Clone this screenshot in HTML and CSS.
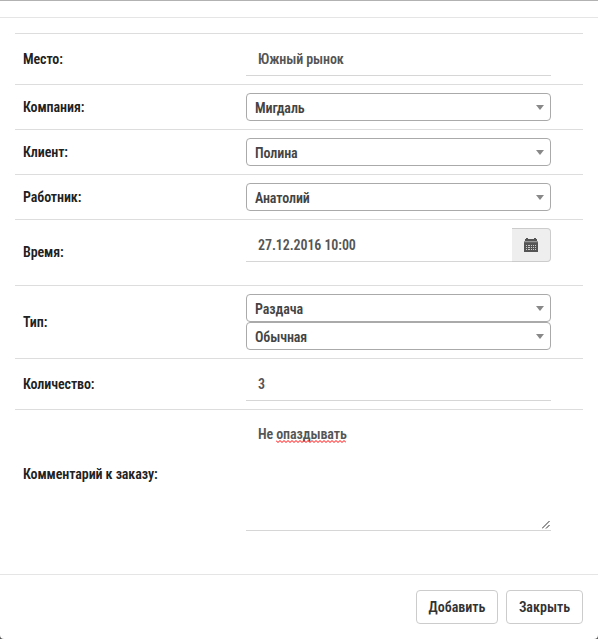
FILE: index.html
```html
<!DOCTYPE html>
<html lang="ru">
<head>
<meta charset="utf-8">
<title>Заказ</title>
<link rel="stylesheet" href="styles.css">
</head>
<body>
<main class="modal">
  <header class="modal-header"></header>
  <section class="modal-body">
    <div class="row"><div class="label">Место:</div><div class="field"><div class="input">Южный рынок</div></div></div>
    <div class="row"><div class="label">Компания:</div><div class="field"><div class="select">Мигдаль<i class="caret"></i></div></div></div>
    <div class="row"><div class="label">Клиент:</div><div class="field"><div class="select">Полина<i class="caret"></i></div></div></div>
    <div class="row"><div class="label">Работник:</div><div class="field"><div class="select">Анатолий<i class="caret"></i></div></div></div>
    <div class="row"><div class="label raised">Время:</div><div class="field"><div class="group"><div class="input">27.12.2016 10:00</div><div class="addon"><svg width="14" height="14" viewBox="0 0 14 14" shape-rendering="crispEdges"><path fill="#555" d="M1 1h1V0h2v1h6V0h2v1h1v2H1zM0 5h14v9H0z"/><path fill="#999" d="M0 3h14v1H0z"/><path fill="#666" d="M0 4h14v1H0z"/><path fill="#ccc" d="M2 7h1v1H2zM4 7h2v1H4zM7 7h1v1H7zM9 7h1v1H9zM11 7h1v1h-1zM2 9h1v1H2zM4 9h2v1H4zM7 9h1v1H7zM9 9h1v1H9zM11 9h1v1h-1zM2 11h1v1H2zM4 11h2v1H4zM7 11h1v1H7zM9 11h1v1H9zM11 11h1v1h-1z"/></svg></div></div></div></div>
    <div class="row"><div class="label">Тип:</div><div class="field"><div class="select">Раздача<i class="caret"></i></div><div class="select">Обычная<i class="caret"></i></div></div></div>
    <div class="row"><div class="label">Количество:</div><div class="field"><div class="input">3</div></div></div>
    <div class="row"><div class="label raised">Комментарий к заказу:</div><div class="field"><div class="input area">Не <span class="misspelled">опаздывать<svg class="wave" width="70" height="3"><path fill="none" stroke="#f00" d="M0 .5l2 2 2-2 2 2 2-2 2 2 2-2 2 2 2-2 2 2 2-2 2 2 2-2 2 2 2-2 2 2 2-2 2 2 2-2 2 2 2-2 2 2 2-2 2 2 2-2 2 2 2-2 2 2 2-2 2 2 2-2 2 2 2-2 2 2 2-2 2 2"/></svg></span><svg class="grip" width="8" height="8" viewBox="0 0 8 8"><path d="M0 7.500L7.500 0M4 7.500L7.500 4" stroke="#333" fill="none"/></svg></div></div></div>
  </section>
  <footer class="modal-footer"><button class="btn add">Добавить</button><button class="btn close">Закрыть</button></footer>
</main>
</body>
</html>
```
FILE: styles.css
```css
* { box-sizing: border-box; }
body { margin: 0; background: #555; font: 600 14px/20px "Roboto Condensed", Roboto, sans-serif; font-stretch: 75%; letter-spacing: -.1px; color: #212121; }
.modal { height: 639px; background: #fff; border-top: 1px solid #b2b2b2; border-radius: 0 0 4px 4px; overflow: hidden; }
.modal-header { height: 17px; border-bottom: 1px solid #e5e5e5; }
.modal-body { padding: 15px 15px 35px; }
.row { display: grid; grid-template-columns: 223px 305px; align-items: center; padding: 8px; border-top: 1px solid #ddd; }
.raised { padding-bottom: 2px; }
.input { height: 34px; padding: 7px 12px 6px; border-bottom: 1px solid #d6d6d6; color: #555; }
.select { height: 28px; border: 1px solid #aaa; border-radius: 4px; padding: 1px 8px 0; line-height: 28px; color: #444; display: flex; align-items: center; justify-content: space-between; }
.caret { border: 4px solid transparent; border-top: 5px solid #888; border-bottom: 0; margin: 0 -2px 0 0; }
.group { display: flex; margin-bottom: 15px; }
.group .input { flex: 1; }
.addon { width: 39px; height: 34px; background: #eee; border: 1px solid #ccc; border-left: 0; border-radius: 0 4px 4px 0; display: flex; align-items: center; justify-content: center; }
.area { height: 113px; padding-top: 6px; position: relative; }
.misspelled { position: relative; }
.wave { position: absolute; left: 0; top: 14px; }
.grip { position: absolute; right: 1px; bottom: 1px; }
.modal-footer { height: 65px; border-top: 1px solid #e5e5e5; padding: 15px; display: flex; justify-content: flex-end; gap: 8px; }
.btn { height: 34px; padding: 0; background: #fff; border: 1px solid #ccc; border-radius: 4px; font: inherit; color: #333; }
.add { width: 82px; }
.close { width: 77px; }
```
